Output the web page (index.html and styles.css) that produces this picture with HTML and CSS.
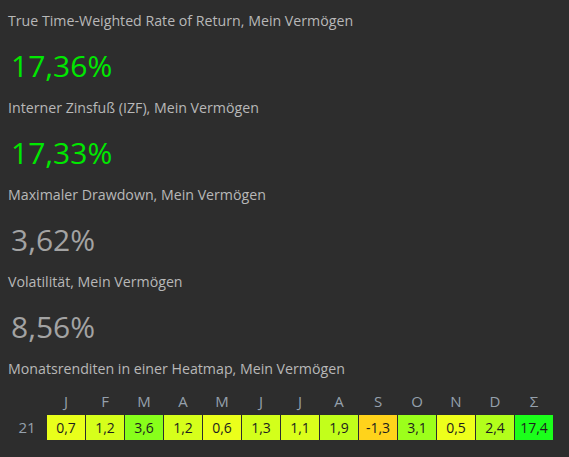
FILE: index.html
```html
<!DOCTYPE html>
<html lang="de">
<head>
    <meta charset="UTF-8">
    <meta name="viewport" content="width=device-width, initial-scale=1.0">
    <title>Kennzahlen</title>
    <link rel="stylesheet" href="styles.css">
</head>
<body>
    <div class="metric">
        <div class="metric-label">True Time-Weighted Rate of Return, Mein Vermögen</div>
        <div class="metric-value positive">17,36%</div>
    </div>

    <div class="metric">
        <div class="metric-label">Interner Zinsfuß (IZF), Mein Vermögen</div>
        <div class="metric-value positive">17,33%</div>
    </div>

    <div class="metric">
        <div class="metric-label">Maximaler Drawdown, Mein Vermögen</div>
        <div class="metric-value">3,62%</div>
    </div>

    <div class="metric">
        <div class="metric-label">Volatilität, Mein Vermögen</div>
        <div class="metric-value">8,56%</div>
    </div>

    <div class="metric-label">Monatsrenditen in einer Heatmap, Mein Vermögen</div>

    <div class="heatmap">
        <div class="heat-head"></div>
        <div class="heat-head">J</div>
        <div class="heat-head">F</div>
        <div class="heat-head">M</div>
        <div class="heat-head">A</div>
        <div class="heat-head">M</div>
        <div class="heat-head">J</div>
        <div class="heat-head">J</div>
        <div class="heat-head">A</div>
        <div class="heat-head">S</div>
        <div class="heat-head">O</div>
        <div class="heat-head">N</div>
        <div class="heat-head">D</div>
        <div class="heat-head">Σ</div>

        <div class="heat-year">21</div>
        <div class="heat-cell" style="background-color: #e9ff1b">0,7</div>
        <div class="heat-cell" style="background-color: #d6ff1b">1,2</div>
        <div class="heat-cell" style="background-color: #88ff1b">3,6</div>
        <div class="heat-cell" style="background-color: #d6ff1b">1,2</div>
        <div class="heat-cell" style="background-color: #ebff1b">0,6</div>
        <div class="heat-cell" style="background-color: #d3ff1b">1,3</div>
        <div class="heat-cell" style="background-color: #dbff1b">1,1</div>
        <div class="heat-cell" style="background-color: #c2ff1b">1,9</div>
        <div class="heat-cell" style="background-color: #ffd31b">-1,3</div>
        <div class="heat-cell" style="background-color: #9cff1b">3,1</div>
        <div class="heat-cell" style="background-color: #eeff1b">0,5</div>
        <div class="heat-cell" style="background-color: #b2ff1b">2,4</div>
        <div class="heat-cell" style="background-color: #1bff1b">17,4</div>
    </div>
</body>
</html>
```

FILE: styles.css
```css
body {
    margin: 0;
    padding: 11px 8px 0 8px;
    background-color: #2d2d2d;
    font-family: "Open Sans", "Noto Sans", sans-serif;
    color: #b8b8b8;
}

/* One block per key figure */
.metric {
    margin-bottom: 10px;
}

.metric-label {
    font-size: 14.2px;
    line-height: 20px;
    color: #b8b8b8;
}

.metric-value {
    margin-top: 13px;
    padding-left: 3px;
    font-size: 30px;
    line-height: 44px;
    color: #a3a3a3;
}

.metric-value.positive {
    color: #00e800;
}

/* Month grid: year column + 12 months + total */
.heatmap {
    display: grid;
    grid-template-columns: repeat(14, 38px);
    column-gap: 1px;
    row-gap: 4px;
    margin-top: 12px;
}

.heat-head,
.heat-year {
    text-align: center;
    font-size: 15px;
    line-height: 20px;
    color: #95a0ac;
}

.heat-year {
    line-height: 25px;
}

.heat-cell {
    height: 25px;
    line-height: 25px;
    text-align: center;
    font-size: 14px;
    color: #1e1e1e;
}
```
